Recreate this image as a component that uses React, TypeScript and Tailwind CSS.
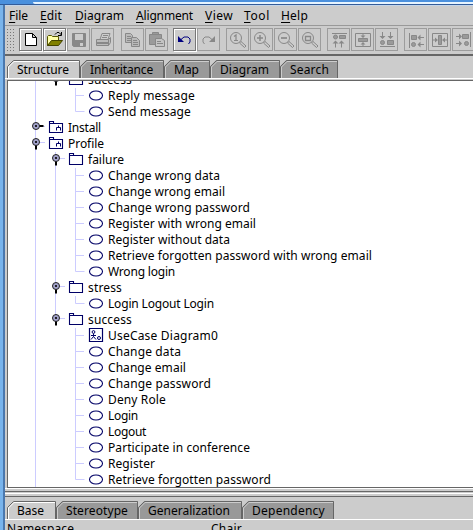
import React, { useLayoutEffect, useRef } from "react";

const FONT = "font-['Noto_Sans',sans-serif]";

/** Single line of text whose tracking is tuned so that it spans `w` pixels. */
function Label({ text, w, mnemonic = false }: { text: string; w: number; mnemonic?: boolean }) {
  const ref = useRef<HTMLSpanElement>(null);
  useLayoutEffect(() => {
    const el = ref.current;
    if (!el) return;
    el.style.letterSpacing = "0px";
    const natural = el.getBoundingClientRect().width;
    el.style.letterSpacing = `${(w - natural) / text.length}px`;
  }, [text, w]);
  return (
    <span ref={ref} className="inline-block whitespace-pre">
      {mnemonic ? (
        <>
          <span className="underline underline-offset-2">{text[0]}</span>
          {text.slice(1)}
        </>
      ) : (
        text
      )}
    </span>
  );
}

const menus: [string, number, string][] = [
  ["File", 19, "w-[31px]"],
  ["Edit", 22, "w-[35px]"],
  ["Diagram", 49, "w-[61px]"],
  ["Alignment", 57, "w-[69px]"],
  ["View", 28, "w-[39px]"],
  ["Tool", 26, "w-[37px]"],
  ["Help", 27, "w-[40px]"],
];

const G = "#888";
const F = "#9a9a9a";

const lens = (
  <>
    <circle cx="9" cy="9" r="5.500" />
    <path d="M12.500 14l1.500-1.500 5 4.500-1.500 1.500z" />
  </>
);

const art: Record<string, React.ReactNode> = {
  new: <path d="M5.500 4.500h7l4 4v8h-11zM12.500 4.500v4h4" fill="#fff" stroke="#000" />,
  open: (
    <>
      <path d="M3.500 16.500v-9l1-1h3l1 1h6v4h-5z" fill="#ffffa8" stroke="#555500" />
      <path d="M3.500 16.500l4-5h11l-4 5z" fill="#808000" stroke="#444400" />
      <path d="M11 5.500l2-2h2l2.500 2.500M17.500 3v3.500h-3.500" stroke="#000" />
    </>
  ),
  save: (
    <>
      <path d="M4.500 4.500h13v13h-12l-1-1z" fill={G} />
      <path d="M7 5h8v6H7zM12 14h3v3h-3z" fill="#ccc" stroke="none" />
    </>
  ),
  print: (
    <>
      <path d="M8 10.500l2-6h8l-2 6M11 6.500h5M10 8.500h5" />
      <path d="M4.500 10.500h12v6h-12zM16.500 10.500l2-2v5l-2 3" fill="#bbb" />
      <path d="M5 13h11v2H5z" fill={G} stroke="none" />
    </>
  ),
  copy: (
    <>
      <path d="M3.500 4.500h5l2 2v7h-7zM5 7.500h4M5 9.500h4M5 11.500h4" fill="#bababa" />
      <path d="M9.500 8.500h5l3 3v6h-8zM11 11.500h4M11 13.500h5M11 15.500h5" fill="#bababa" />
    </>
  ),
  paste: (
    <>
      <path d="M3.500 5.500h12v10h-12zM6.500 5.500v-2h6v2" fill={F} />
      <path d="M9.500 9.500h6l3 2v6h-9zM11 12.500h4M11 14.500h6" fill="#c4c4c4" />
    </>
  ),
  undo: (
    <>
      <path d="M4 7v6h6z" fill="#000080" stroke="none" />
      <path d="M7 10.500l3-2.500h4l2 2v3l-1.500 2" stroke="#000080" />
    </>
  ),
  redo: (
    <>
      <path d="M17 7v6h-6z" fill={G} stroke="none" />
      <path d="M14 10.500l-3-2.500H7l-2 2v3l1.500 2" />
    </>
  ),
  z1: (
    <>
      {lens}
      <path d="M7 7.500l2-1.500v5.500M7 11.500h4" strokeWidth="1.200" />
    </>
  ),
  zin: (
    <>
      {lens}
      <path d="M6 9h6M9 6v6" strokeWidth="1.500" />
    </>
  ),
  zout: (
    <>
      {lens}
      <path d="M6 9h6" strokeWidth="1.700" />
    </>
  ),
  zfit: (
    <>
      {lens}
      <path d="M6.500 7.500h5v4h-5z" strokeWidth="1.300" />
    </>
  ),
  top: (
    <>
      <path d="M4 4.500h15M7.500 18.500v-5M13.500 18.500v-5" />
      <path d="M7.500 11.500l3 3h-6zM13.500 11.500l3 3h-6z" fill={G} stroke="none" />
      <circle cx="7.500" cy="8" r="2" fill={F} />
      <path d="M11.500 6.500h6v3h-6z" fill={F} />
    </>
  ),
  mid: (
    <>
      <path d="M3.500 4.500h15v13h-15zM11 5v3M11 14v3" />
      <path d="M11 9l2.500-2.500h-5zM11 13l2.500 2.500h-5z" fill={G} stroke="none" />
      <path d="M6.500 9.500h9v3h-9z" fill={F} />
    </>
  ),
  bottom: (
    <>
      <path d="M4 17.500h15M6.500 3v6M14.500 3v6" />
      <path d="M6.500 10l3-3h-6zM14.500 10l3-3h-6z" fill={G} stroke="none" />
      <circle cx="6.500" cy="13.500" r="2" fill={F} />
      <path d="M11.500 11.500h6v4h-6z" fill={F} />
    </>
  ),
  left: (
    <>
      <path d="M4.500 4v15M14 8.500h5M14 15.500h5" />
      <path d="M12.500 8.500l3-3v6zM12.500 15.500l3-3v6z" fill={G} stroke="none" />
      <path d="M6.500 6.500h5v4h-5z" fill={F} />
      <circle cx="8.500" cy="15.500" r="2" fill={F} />
    </>
  ),
  center: (
    <>
      <path d="M3.500 4.500h15v13h-15zM4 11h3M15 11h3" />
      <path d="M9 11l-3-2.500v5zM13 11l3-2.500v5z" fill={G} stroke="none" />
      <path d="M9.500 6.500h3v9h-3z" fill={F} />
    </>
  ),
  right: (
    <>
      <path d="M17.500 3v15M3 7.500h4M3 14.500h4" />
      <path d="M9 7.500l-3-3v6zM9 14.500l-3-3v6z" fill={G} stroke="none" />
      <path d="M9.500 5.500h6v4h-6z" fill={F} />
      <circle cx="13.500" cy="14.500" r="2" fill={F} />
    </>
  ),
};

const toolGroups = [
  ["new", "open", "save", "print"],
  ["copy", "paste"],
  ["undo", "redo"],
  ["z1", "zin", "zout", "zfit"],
  ["top", "mid", "bottom"],
  ["left", "center", "right"],
];
const groupGap = ["", "ml-[7px]", "ml-[5px]", "ml-[6px]", "ml-[6px]", "ml-[6px]"];

function ToolButton({ kind }: { kind: string }) {
  const live = kind === "new" || kind === "open" || kind === "undo";
  return (
    <div
      className={`h-[23px] w-[23px] shrink-0 border ${
        live ? "border-[#777] shadow-[1px_1px_0_#fff,inset_1px_1px_0_#fff]" : "border-[#9c9c9c]"
      }`}
    >
      <svg width="21" height="21" fill="none" stroke={G} className="block">
        {art[kind]}
      </svg>
    </div>
  );
}

type Tab = { text: string; w: number; tw: number };

function TabStrip({ tabs }: { tabs: Tab[] }) {
  return (
    <div className="flex h-[18px] pl-[2px]">
      {tabs.map((t, i) => (
        <div key={t.text} className="relative h-[18px] shrink-0" style={{ width: t.w }}>
          <svg width={t.w} height="18" className="absolute left-0 top-0">
            <path d={`M0 18V6L6 0H${t.w}V18Z`} fill={i === 0 ? "#ccc" : "#999"} />
            {i > 0 && <path d="M0 0H6L0 6Z" fill="#ccc" />}
            <path d={`M.5 18V6.500L6.500 .5H${t.w - 0.5}V18`} fill="none" stroke="#666" />
            <path d={`M1.500 18V7L7 1.500H${t.w - 1}`} fill="none" stroke={i === 0 ? "#fff" : "#ccc"} />
          </svg>
          <div className="relative pl-[10px] leading-[20px]">
            <Label text={t.text} w={t.tw} />
          </div>
        </div>
      ))}
    </div>
  );
}

type Node = {
  text: string;
  w: number;
  depth: number;
  icon: "use" | "folder" | "package" | "diagram";
  open?: boolean;
  last?: boolean;
};
const nodes: Node[] = [
  { text: "success", w: 44, depth: 1, icon: "folder", open: true, last: true },
  { text: "Reply message", w: 87, depth: 2, icon: "use" },
  { text: "Send message", w: 83, depth: 2, icon: "use", last: true },
  { text: "Install", w: 33, depth: 0, icon: "package", open: false },
  { text: "Profile", w: 36, depth: 0, icon: "package", open: true },
  { text: "failure", w: 36, depth: 1, icon: "folder", open: true },
  { text: "Change wrong data", w: 112, depth: 2, icon: "use" },
  { text: "Change wrong email", w: 117, depth: 2, icon: "use" },
  { text: "Change wrong password", w: 142, depth: 2, icon: "use" },
  { text: "Register with wrong email", w: 148, depth: 2, icon: "use" },
  { text: "Register without data", w: 122, depth: 2, icon: "use" },
  { text: "Retrieve forgotten password with wrong email", w: 264, depth: 2, icon: "use" },
  { text: "Wrong login", w: 67, depth: 2, icon: "use", last: true },
  { text: "stress", w: 34, depth: 1, icon: "folder", open: true },
  { text: "Login Logout Login", w: 106, depth: 2, icon: "use", last: true },
  { text: "success", w: 44, depth: 1, icon: "folder", open: true, last: true },
  { text: "UseCase Diagram0", w: 110, depth: 2, icon: "diagram" },
  { text: "Change data", w: 73, depth: 2, icon: "use" },
  { text: "Change email", w: 78, depth: 2, icon: "use" },
  { text: "Change password", w: 103, depth: 2, icon: "use" },
  { text: "Deny Role", w: 58, depth: 2, icon: "use" },
  { text: "Login", w: 30, depth: 2, icon: "use" },
  { text: "Logout", w: 38, depth: 2, icon: "use" },
  { text: "Participate in conference", w: 142, depth: 2, icon: "use" },
  { text: "Register", w: 47, depth: 2, icon: "use" },
  { text: "Retrieve forgotten password", w: 163, depth: 2, icon: "use", last: true },
];

function NodeIcon({ icon }: { icon: Node["icon"] }) {
  return (
    <svg width="16" height="16" fill="none" stroke="#000066" className="shrink-0">
      {icon === "use" && <ellipse cx="8" cy="7.500" rx="6.500" ry="4.500" strokeWidth="1.100" />}
      {(icon === "folder" || icon === "package") && (
        <path d="M1.500 12.500v-11h4v2h9v9zM1.500 3.500h4" strokeWidth="1.100" />
      )}
      {icon === "package" && <path d="M8.500 10.500v-3h4v3M10.500 7.500v-2" />}
      {icon === "diagram" && (
        <>
          <path d="M1.500 .5h13v13h-13z" strokeWidth="1.200" />
          <circle cx="5.500" cy="4" r="1.400" />
          <path d="M5.500 5.500v3M3 7.500h5M5.500 8.500l-2.500 3M5.500 8.500l2.500 3" />
          <circle cx="11" cy="10" r="1.500" />
        </>
      )}
    </svg>
  );
}

function Row({ node, trunk }: { node: Node; trunk: boolean }) {
  const { depth, icon, open, last } = node;
  const x = 28 + depth * 20;
  return (
    <div className="flex h-[16px] shrink-0 items-center">
      <svg width={40 + depth * 20} height="16" className="shrink-0" fill="none">
        <path d="M27.500 0v16" stroke="#ccccff" />
        {trunk && <path d="M47.500 0v16" stroke="#ccccff" />}
        {depth === 1 && <path d={last ? "M47.500 0v8" : "M47.500 0v16"} stroke="#ccccff" />}
        {depth === 2 && (
          <path d={last ? "M67.500 0v7.500h9" : "M67.500 0v16M67 7.500h9"} stroke="#ccccff" />
        )}
        {depth < 2 && (
          <>
            <path d={`M${x} 6.500h9`} stroke="#ccccff" />
            <path d={open ? `M${x} 7v6.500` : `M${x} 6h7.500`} stroke="#000" strokeWidth="2" />
            <circle cx={x} cy="6" r="3.500" fill="#a3a3cc" stroke="#222" />
            <circle cx={x} cy="6" r="1.100" fill="#000" />
          </>
        )}
      </svg>
      <NodeIcon icon={icon} />
      <span className="ml-[4px] leading-[16px]">
        <Label text={node.text} w={node.w} />
      </span>
    </div>
  );
}

/** The level-1 trunk also runs past the children of folders that have a later sibling. */
const hasTrunk = (i: number) => nodes[i].depth === 2 && i > 5 && i < 15;

export default function App() {
  return (
    <div className={`flex h-[530px] w-[473px] flex-col overflow-hidden bg-[#ccc] text-[12px] text-black ${FONT}`}>
      <div className="flex h-[5px] shrink-0 flex-col border-b border-[#335c99] bg-[#4a90dd] pt-[2px]">
        <div className="ml-[33px] h-[2px] rounded-bl-[2px] bg-[#e6f4ff]" />
      </div>
      <div className="flex min-h-0 flex-1">
        <div className="w-[3px] shrink-0 bg-[#79b4ec]" />
        <div className="w-[2px] shrink-0 bg-[#4b78ae]" />
        <div className="flex min-w-0 flex-1 flex-col">
          <div className="h-[1px] shrink-0 bg-[#c3d5ea]" />
          <div className="flex h-[19px] shrink-0 items-center pl-[4px] pt-[1px]">
            {menus.map(([t, w, c]) => (
              <div key={t} className={`shrink-0 ${c}`}>
                <Label text={t} w={w} mnemonic />
              </div>
            ))}
          </div>
          <div className="flex h-[31px] shrink-0 items-start border-b-2 border-t border-b-[#666] border-t-[#999] pt-[2px]">
            <div className="ml-[1px] mr-[3px] h-[24px] w-[10px] shrink-0 bg-[radial-gradient(#777_0.7px,transparent_0.8px)] bg-[length:3px_3px]" />
            {toolGroups.map((g, i) => (
              <div key={i} className={`flex shrink-0 gap-[1px] ${groupGap[i]}`}>
                {g.map((k) => (
                  <ToolButton key={k} kind={k} />
                ))}
              </div>
            ))}
          </div>
          <div className="mt-[4px] shrink-0">
            <TabStrip
              tabs={[
                { text: "Structure", w: 73, tw: 52 },
                { text: "Inheritance", w: 84, tw: 63 },
                { text: "Map", w: 46, tw: 25 },
                { text: "Diagram", w: 70, tw: 49 },
                { text: "Search", w: 58, tw: 39 },
              ]}
            />
          </div>
          <div className="flex h-[2px] shrink-0 flex-col">
            <div className="h-[1px] bg-white" />
            <div className="h-[1px] bg-[#ccc]" />
          </div>
          <div className="ml-[2px] h-[408px] shrink-0 overflow-hidden border-b border-l border-t border-[#666] bg-white">
            <div className="-mt-[9px] flex flex-col">
              {nodes.map((n, i) => (
                <Row key={i} node={n} trunk={hasTrunk(i)} />
              ))}
            </div>
          </div>
          <div className="h-[1px] shrink-0 bg-white" />
          <div className="mt-[2px] h-[6px] shrink-0 border-b border-t border-[#666] pt-[1px]">
            <div className="h-[1px] bg-white" />
          </div>
          <div className="mt-[4px] shrink-0">
            <TabStrip
              tabs={[
                { text: "Base", w: 49, tw: 27 },
                { text: "Stereotype", w: 82, tw: 62 },
                { text: "Generalization", w: 104, tw: 82 },
                { text: "Dependency", w: 92, tw: 73 },
              ]}
            />
          </div>
          <div className="flex shrink-0 border-t border-white pl-[2px] leading-[18px]">
            <div className="w-[204px]">
              <Label text="Namespace" w={67} />
            </div>
            <Label text="Chair" w={31} />
          </div>
        </div>
      </div>
    </div>
  );
}
